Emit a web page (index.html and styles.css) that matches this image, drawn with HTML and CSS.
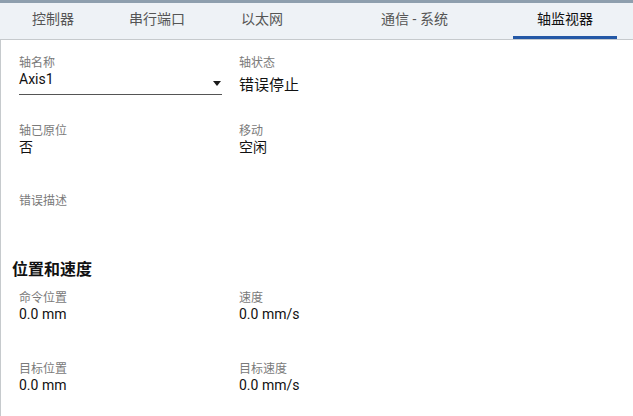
FILE: index.html
```html
<!DOCTYPE html>
<html lang="zh-CN">
<head>
    <meta charset="UTF-8">
    <title>轴监视器</title>
    <link rel="stylesheet" href="styles.css">
</head>
<body>
    <nav class="tabs">
        <div class="tab tab-1">控制器</div>
        <div class="tab tab-2">串行端口</div>
        <div class="tab tab-3">以太网</div>
        <div class="tab tab-4">通信 - 系统</div>
        <div class="tab tab-5 active">轴监视器</div>
    </nav>

    <main class="panel">
        <div class="grid grid-top">
            <div class="field row-a">
                <div class="label">轴名称</div>
                <div class="select">
                    <span class="value">Axis1</span>
                    <svg class="caret" width="8" height="5" viewBox="0 0 8 5"><path d="M0 0h8L4 5z" fill="#1a1a1a"/></svg>
                </div>
            </div>
            <div class="field row-a">
                <div class="label">轴状态</div>
                <div class="value value-lg">错误停止</div>
            </div>

            <div class="field row-b">
                <div class="label">轴已原位</div>
                <div class="value">否</div>
            </div>
            <div class="field row-b">
                <div class="label">移动</div>
                <div class="value">空闲</div>
            </div>

            <div class="field row-c">
                <div class="label">错误描述</div>
                <div class="value"></div>
            </div>
        </div>

        <h2 class="section-title">位置和速度</h2>

        <div class="grid grid-bottom">
            <div class="field row-d">
                <div class="label">命令位置</div>
                <div class="value">0.0 mm</div>
            </div>
            <div class="field row-d">
                <div class="label">速度</div>
                <div class="value">0.0 mm/s</div>
            </div>
            <div class="field row-d">
                <div class="label">目标位置</div>
                <div class="value">0.0 mm</div>
            </div>
            <div class="field row-d">
                <div class="label">目标速度</div>
                <div class="value">0.0 mm/s</div>
            </div>
        </div>
    </main>
</body>
</html>
```

FILE: styles.css
```css
* {
    margin: 0;
    padding: 0;
    box-sizing: border-box;
}

:root {
    --tab-bg: #eef2f6;
    --tab-top: #8e9fae;
    --line: #c6cacd;
    --accent: #2458a6;
    --label: #7a7a7a;
    --text: #111;
}

body {
    font-family: Roboto, "Noto Sans CJK SC", sans-serif;
    background: white;
    color: var(--text);
    width: 633px;
    height: 416px;
    overflow: hidden;
}

.tabs {
    display: flex;
    background: var(--tab-bg);
    border-top: 3px solid var(--tab-top);
    border-bottom: 1px solid var(--line);
    height: 40px;
}

.tab {
    position: relative;
    height: 36px;
    line-height: 32px;
    text-align: center;
    font-size: 14px;
    color: #555;
}

.tab-1 { width: 106px; }
.tab-2 { width: 102px; }
.tab-3 { width: 108px; }
.tab-4 { width: 197px; }
.tab-5 { width: 104px; }

.tab.active {
    color: var(--text);
}

.tab.active::after {
    content: "";
    position: absolute;
    left: 0;
    right: 0;
    bottom: 0;
    height: 3px;
    background: var(--accent);
}

.panel {
    border-left: 1px solid var(--line);
    height: 376px;
}

.grid {
    display: grid;
    grid-template-columns: 203px 1fr;
    column-gap: 17px;
    padding-left: 18px;
}

.grid-top {
    padding-top: 16px;
}

.row-a { height: 68px; }
.row-b { height: 70px; }
.row-c { height: 55px; }
.row-d { height: 71px; }

.label {
    font-size: 12px;
    line-height: 14px;
    color: var(--label);
}

.value {
    font-size: 14px;
    line-height: 18px;
    min-height: 18px;
}

.value-lg {
    font-size: 15px;
    padding-top: 6px;
}

.select {
    display: flex;
    justify-content: space-between;
    align-items: center;
    border-bottom: 1px solid #555;
    padding-bottom: 6px;
}

.caret {
    margin-top: 9px;
    margin-right: 1px;
}

.section-title {
    font-size: 16px;
    font-weight: bold;
    line-height: 22px;
    padding-left: 11px;
    margin-top: 10px;
}

.grid-bottom {
    padding-top: 10px;
}
```
